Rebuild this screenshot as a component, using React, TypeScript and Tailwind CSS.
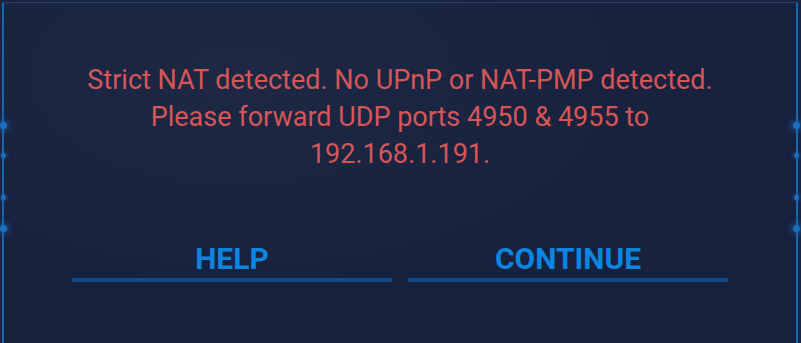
import React from "react";

function Dots({ side }: { side: "left" | "right" }) {
  const big = side === "left" ? "left-[-4px]" : "right-[-4px]";
  const small = side === "left" ? "left-[-3px]" : "right-[-3px]";
  return (
    <>
      <div className={`absolute ${big} top-[119px] w-[7px] h-[7px] rounded-full bg-[#1a6fc0] shadow-[0_0_6px_2px_rgba(26,111,192,0.6)]`} />
      <div className={`absolute ${small} top-[150px] w-[5px] h-[5px] rounded-full bg-[#1a6fc0] shadow-[0_0_4px_1px_rgba(26,111,192,0.5)]`} />
      <div className={`absolute ${small} top-[192px] w-[5px] h-[5px] rounded-full bg-[#1a6fc0] shadow-[0_0_4px_1px_rgba(26,111,192,0.5)]`} />
      <div className={`absolute ${big} top-[222px] w-[7px] h-[7px] rounded-full bg-[#1a6fc0] shadow-[0_0_6px_2px_rgba(26,111,192,0.6)]`} />
    </>
  );
}

export default function App() {
  return (
    <div className="w-[801px] h-[343px] overflow-hidden bg-[#1a2440] pt-[2px] pl-[2px] pr-[3px]" style={{ fontFamily: "Roboto, 'Liberation Sans', sans-serif" }}>
      <div className="relative h-[360px] border-l-2 border-r-2 border-t border-l-[#1566b2] border-r-[#1566b2] border-t-[#22416e] bg-[radial-gradient(ellipse_at_30%_20%,#1d2845_0%,#18223e_50%,#161f3b_100%)]">
        <Dots side="left" />
        <Dots side="right" />
        <div className="flex flex-col items-center pt-[59px]">
          <div className="text-center text-[27px] leading-[37px] text-[#d65656]">
            <div>Strict NAT detected. No UPnP or NAT-PMP detected.</div>
            <div>Please forward UDP ports 4950 &amp; 4955 to</div>
            <div>192.168.1.191.</div>
          </div>
          <div className="flex gap-[16px] mt-[67px]">
            <button className="w-[320px] h-[42px] flex items-center justify-center text-[30px] font-bold text-[#0b85df] border-b-4 border-[#0e4b87] pb-[2px]">
              HELP
            </button>
            <button className="w-[320px] h-[42px] flex items-center justify-center text-[30px] font-bold text-[#0b85df] border-b-4 border-[#0e4b87] pb-[2px]">
              CONTINUE
            </button>
          </div>
        </div>
      </div>
    </div>
  );
}
